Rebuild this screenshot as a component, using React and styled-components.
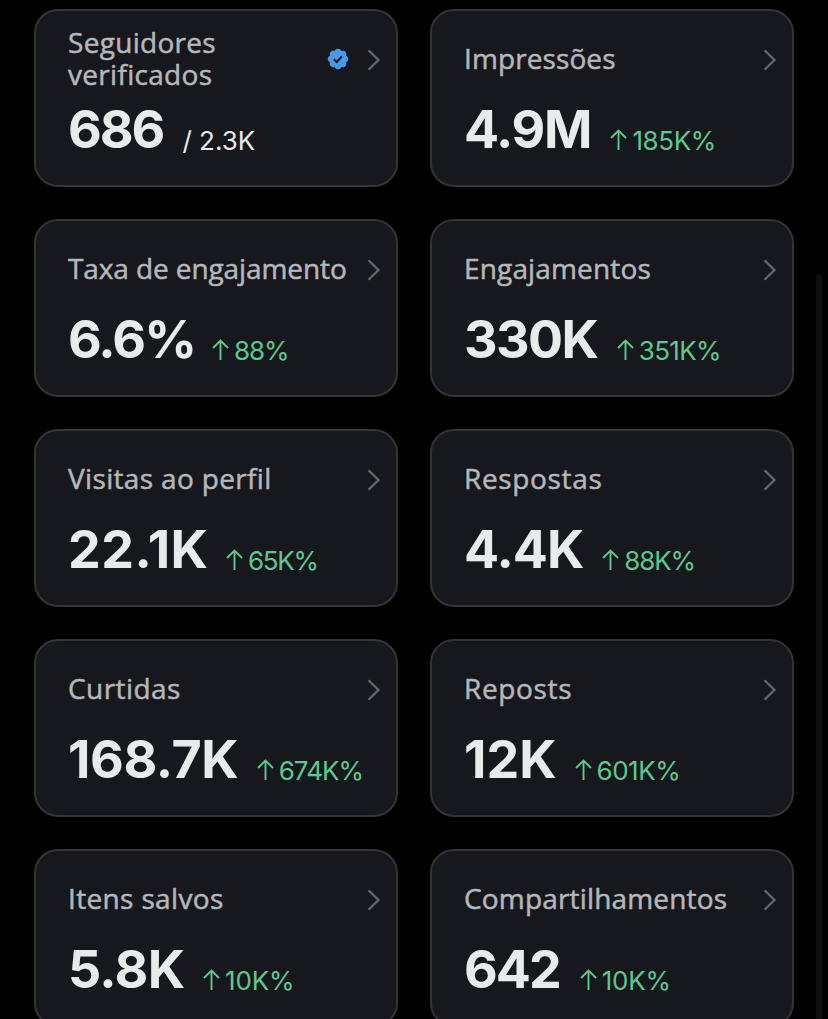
import React from "react";
import styled, { createGlobalStyle } from "styled-components";

const GlobalStyle = createGlobalStyle`
  * {
    box-sizing: border-box;
  }
  body {
    margin: 0;
    background: #000;
    overflow: hidden;
  }
`;

const Screen = styled.main`
  display: flex;
  height: 1019px;
  overflow: hidden;
  background: #000;
  font-family: Inter, "Liberation Sans", sans-serif;
`;

const Grid = styled.section`
  display: grid;
  grid-template-columns: 364px 364px;
  grid-auto-rows: 178px;
  gap: 32px;
  padding: 9px 22px 0 34px;
`;

const Card = styled.article`
  display: flex;
  flex-direction: column;
  padding: 17px 15px 0 32px;
  border: 2px solid #333438;
  border-radius: 24px;
  background: #17181d;
`;

const CardHeader = styled.header`
  display: flex;
  align-items: center;
  height: 64px;
`;

const Label = styled.h2`
  flex: 1;
  margin: 0;
  padding-bottom: 4px;
  color: #b6b7ba;
  font: 500 28px/32px "Open Sans", "Noto Sans", sans-serif;
  letter-spacing: ${(p) => p.$spacing || 0}px;
  white-space: pre-line;
  -webkit-text-stroke: 0.5px #b6b7ba;
`;

const Figures = styled.div`
  display: flex;
  align-items: flex-end;
  height: 64px;
  margin-top: 6px;
`;

// the trailing letter-spacing is taken back so the gap stays constant
const Value = styled.strong`
  margin-right: ${(p) => (p.$gap || 18) - (p.$spacing || 0)}px;
  color: #e9eaec;
  font-size: 52px;
  font-weight: 700;
  line-height: 64px;
  letter-spacing: ${(p) => p.$spacing || 0}px;
`;

const Change = styled.span`
  display: flex;
  align-items: baseline;
  color: #5fc78f;
  font-size: 26px;
  line-height: 43px;
  letter-spacing: ${(p) => p.$spacing || 0}px;

  svg {
    margin-right: 5px;
  }
`;

const Total = styled.span`
  color: #e9eaec;
  font-size: 26px;
  line-height: 43px;
`;

const BadgeIcon = styled.svg`
  margin: 0 17px 2px 0;
`;

const ScrollThumb = styled.div`
  width: 6px;
  height: 760px;
  margin-top: 274px;
  border-radius: 3px;
  background: #0f0f10;
`;

const Verified = () => (
  <BadgeIcon width="24" height="24" viewBox="0 0 22 22">
    <path
      fill="#4a99e9"
      d="M20.396 11c-.018-.646-.215-1.275-.57-1.816-.354-.54-.852-.972-1.438-1.246.223-.607.27-1.264.14-1.897-.131-.634-.437-1.218-.882-1.687-.47-.445-1.053-.75-1.687-.882-.633-.13-1.29-.083-1.897.14-.273-.587-.704-1.086-1.245-1.44S11.647 1.62 11 1.604c-.646.017-1.273.213-1.813.568s-.969.854-1.24 1.44c-.608-.223-1.267-.272-1.902-.14-.635.13-1.22.436-1.69.882-.445.47-.749 1.055-.878 1.688-.13.633-.08 1.29.144 1.896-.587.274-1.087.705-1.443 1.245-.356.54-.555 1.17-.574 1.817.02.647.218 1.276.574 1.817.356.54.856.972 1.443 1.245-.224.606-.274 1.263-.144 1.896.13.634.433 1.218.877 1.688.47.443 1.054.747 1.687.878.633.132 1.29.084 1.897-.136.274.586.705 1.084 1.246 1.439.54.354 1.17.551 1.816.569.647-.016 1.276-.213 1.817-.567s.972-.854 1.245-1.44c.604.239 1.266.296 1.903.164.636-.132 1.22-.447 1.68-.907.46-.46.776-1.044.908-1.681s.075-1.299-.165-1.903c.586-.274 1.084-.705 1.439-1.246.354-.54.551-1.17.569-1.816z"
    />
    <path
      fill="none"
      stroke="#17181d"
      strokeWidth="1.9"
      d="M7.2 11.2l2.6 2.6 4.8-5.2"
    />
  </BadgeIcon>
);

const Chevron = () => (
  <svg width="14" height="22" viewBox="0 0 14 22">
    <path
      fill="none"
      stroke="#66676b"
      strokeWidth="2.3"
      d="M1.5 1.2l10 9.8-10 9.8"
    />
  </svg>
);

const ArrowUp = () => (
  <svg width="17" height="21" viewBox="0 0 17 21">
    <path
      fill="none"
      stroke="currentColor"
      strokeWidth="1.9"
      d="M8.5 21V2M1 9l7.5-7.5L16 9"
    />
  </svg>
);

// tracking: letter-spacing of [label, value, change]
const metrics = [
  {
    label: "Seguidores\nverificados",
    value: "686",
    total: "2.3K",
    verified: true,
    gap: 17,
    tracking: [0.3, -2, 0],
  },
  { label: "Impressões", value: "4.9M", change: "185K%", tracking: [0.1, -1.3, -0.4] },
  {
    label: "Taxa de engajamento",
    value: "6.6%",
    change: "88%",
    gap: 15,
    tracking: [-0.1, -1.9, -1],
  },
  { label: "Engajamentos", value: "330K", change: "351K%", tracking: [0.15, -1.6, -0.7] },
  { label: "Visitas ao perfil", value: "22.1K", change: "65K%", tracking: [0.34, 0.5, -1.3] },
  { label: "Respostas", value: "4.4K", change: "88K%", tracking: [0.65, -1, -1.2] },
  { label: "Curtidas", value: "168.7K", change: "674K%", tracking: [0.43, -0.4, -0.9] },
  { label: "Reposts", value: "12K", change: "601K%", tracking: [0.65, 0, -0.5] },
  { label: "Itens salvos", value: "5.8K", change: "10K%", tracking: [0.35, -0.7, -0.2] },
  { label: "Compartilhamentos", value: "642", change: "10K%", tracking: [0.17, -2, -0.2] },
];

const MetricCard = ({ metric }) => {
  const [labelSpacing, valueSpacing, changeSpacing] = metric.tracking;
  return (
    <Card>
      <CardHeader>
        <Label $spacing={labelSpacing}>{metric.label}</Label>
        {metric.verified && <Verified />}
        <Chevron />
      </CardHeader>
      <Figures>
        <Value $spacing={valueSpacing} $gap={metric.gap}>
          {metric.value}
        </Value>
        {metric.total && <Total>/ {metric.total}</Total>}
        {metric.change && (
          <Change $spacing={changeSpacing}>
            <ArrowUp />
            {metric.change}
          </Change>
        )}
      </Figures>
    </Card>
  );
};

const App = () => (
  <Screen>
    <GlobalStyle />
    <Grid>
      {metrics.map((metric) => (
        <MetricCard key={metric.label} metric={metric} />
      ))}
    </Grid>
    <ScrollThumb />
  </Screen>
);

export default App;
